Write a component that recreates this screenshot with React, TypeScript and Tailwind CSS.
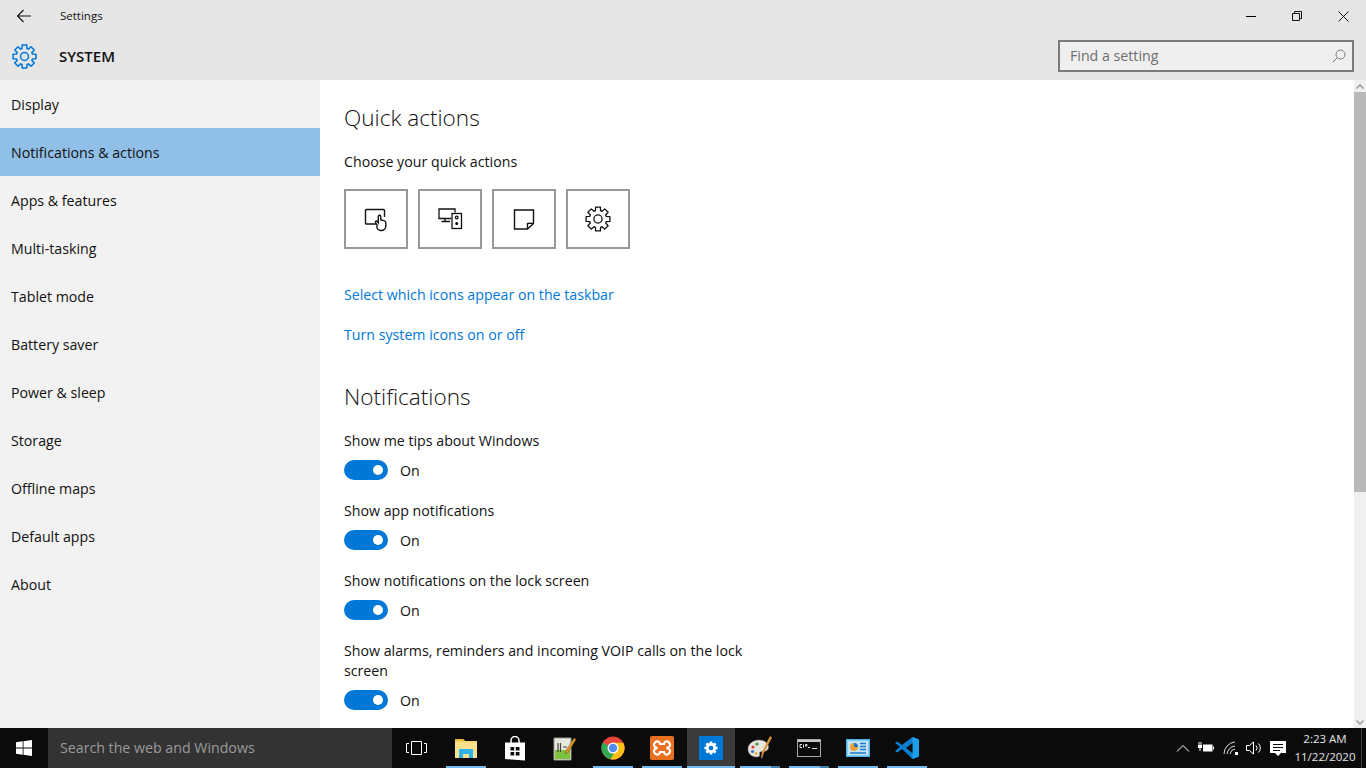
const menu = [
  "Display",
  "Notifications & actions",
  "Apps & features",
  "Multi-tasking",
  "Tablet mode",
  "Battery saver",
  "Power & sleep",
  "Storage",
  "Offline maps",
  "Default apps",
  "About",
];

// outline of a cog with 8 teeth, shared by every settings icon
const gearPath = (c: number, outer: number, inner: number) => {
  const pts: string[] = [];
  for (let i = 0; i < 8; i++) {
    const a = (i * Math.PI) / 4;
    const at = (r: number, d: number) =>
      `${(c + r * Math.cos(a + d)).toFixed(2)} ${(c + r * Math.sin(a + d)).toFixed(2)}`;
    pts.push(at(inner, -0.3), at(outer, -0.2), at(outer, 0.2), at(inner, 0.3));
  }
  return `M${pts.join("L")}Z`;
};

const Gear = ({ color, size, width = 1 }: { color: string; size: number; width?: number }) => (
  <svg width={size} height={size} viewBox="0 0 24 24" fill="none" stroke={color} strokeWidth={width} strokeLinejoin="round">
    <path d={gearPath(12, 11.2, 8)} />
    <circle cx="12" cy="12" r="3.8" />
  </svg>
);

const TouchIcon = () => (
  <svg width="26" height="26" viewBox="0 0 26 26" fill="none" stroke="#111" strokeWidth="1.4">
    <path d="M13 18H3.5a1 1 0 0 1-1-1V4.500a1 1 0 0 1 1-1h17a1 1 0 0 1 1 1V11" />
    <path d="M14 22v-3l-1.500-2.500c-.6-1.200 1-2 1.800-1l1 1.200V10.500c0-1.600 2.500-1.600 2.500 0V14l3 .6c1.200.3 2 1 2 2.400v3a4.500 4.500 0 0 1-4.500 4.500h-1A4.500 4.500 0 0 1 14 22z" fill="#fff" />
  </svg>
);

const ConnectIcon = () => (
  <svg width="26" height="26" viewBox="0 0 26 26" fill="none" stroke="#111" strokeWidth="1.3">
    <path d="M14 12.500H2V3h16v3.500" />
    <path d="M8 12.500V15.500M4.500 15.500H13" />
    <rect x="15" y="7.500" width="9.500" height="15" />
    <circle cx="19.750" cy="11.500" r="1.300" />
    <circle cx="19.750" cy="17.500" r="0.900" fill="#111" />
  </svg>
);

const NoteIcon = () => (
  <svg width="24" height="24" viewBox="0 0 24 24" fill="none" stroke="#111" strokeWidth="1.400">
    <path d="M2.500 3h19v13.500l-6 5.500H2.500z" />
    <path d="M21.500 16.500c-2 0-5.500-.5-6 0v5.500" />
  </svg>
);

const Toggle = ({ label }: { label: string }) => (
  <div className="mt-[21px] w-[420px] first:mt-[18px]">
    <p className="leading-5">{label}</p>
    <div className="mt-[9px] flex h-5 items-center gap-3">
      <div className="flex h-5 w-11 items-center justify-end rounded-full bg-[#0078d7] pr-[5px]">
        <div className="h-[10px] w-[10px] rounded-full bg-white" />
      </div>
      <span className="pt-[2px]">On</span>
    </div>
  </div>
);

const Explorer = () => (
  <svg width="24" height="22" viewBox="0 0 24 22">
    <path d="M1 2h8l2 2h12v17H1z" fill="#f5d67b" />
    <path d="M1 2h8l2 2H1z" fill="#e8b93f" />
    <path d="M1 6h22v15H1z" fill="#fbe08d" />
    <path d="M5 21v-9h14v9h-4v-4H9v4z" fill="#2fb4ea" />
  </svg>
);

const Store = () => (
  <svg width="22" height="25" viewBox="0 0 22 25" fill="#fff">
    <path d="M7 7V4.500a4 4 0 0 1 8 0V7" fill="none" stroke="#fff" strokeWidth="1.500" />
    <path d="M1 6.500h20v18L1 23zM6.500 11v3.500h3.700V11zm5.300 0v3.500h3.700V11zm-5.300 5v3.500h3.700V16zm5.300 0v3.500h3.700V16z" fillRule="evenodd" />
  </svg>
);

const NotepadPlus = () => (
  <svg width="24" height="25" viewBox="0 0 24 25">
    <path d="M2 2h17v22H2z" fill="#e8e8dc" stroke="#9a9a8c" />
    <path d="M3 14h15v9H3z" fill="#7cc23f" />
    <path d="M6 7v9M8.500 7v9M11 11h4" stroke="#444" strokeWidth="1.200" />
    <path d="M22 2l2 1.500-8 13-2.500 1.500.3-3z" fill="#d99a2b" stroke="#7a4f10" strokeWidth="0.500" />
  </svg>
);

const Chrome = () => (
  <svg width="24" height="24" viewBox="0 0 24 24">
    <circle cx="12" cy="12" r="11.500" fill="#e8453c" />
    <path d="M12 12 L1.700 6.500 A11.500 11.500 0 0 0 9.500 23.200 L15 14z" fill="#34a853" />
    <path d="M12 6.800h10.300A11.500 11.500 0 0 1 9.500 23.200L15 14z" fill="#fbc116" />
    <circle cx="12" cy="12" r="5.500" fill="#fff" />
    <circle cx="12" cy="12" r="4.200" fill="#4d8cf5" />
  </svg>
);

const Xampp = () => (
  <svg width="24" height="24" viewBox="0 0 24 24">
    <rect width="24" height="24" rx="2" fill="#e8701f" />
    <path d="M5 6.500c2-2 5-1 5 1.500h4c0-2.500 3-3.500 5-1.500s1 5-1.500 5v1c2.500 0 3.500 3 1.500 5s-5 1-5-1.500h-4c0 2.500-3 3.500-5 1.500s-1-5 1.500-5v-1C4 11.500 3 8.500 5 6.500z" fill="none" stroke="#fff" strokeWidth="2.200" />
  </svg>
);

const Palette = () => (
  <svg width="26" height="26" viewBox="0 0 26 26">
    <path d="M12 5C6 5 1 9 1 14s4 8 9 8c2.500 0 3-1.500 2.500-3-.5-1.800 1-2.500 3-2.500 3.500 0 6-1.500 6-4.500C21.500 8 17 5 12 5z" fill="#e6e4dc" stroke="#8a8a8a" strokeWidth="0.500" />
    <circle cx="6" cy="12" r="1.600" fill="#d9433a" />
    <circle cx="10" cy="9" r="1.600" fill="#3f9a4a" />
    <circle cx="5.500" cy="16.500" r="1.600" fill="#3c78c8" />
    <circle cx="9" cy="18.500" r="1.400" fill="#e8b93f" />
    <path d="M23 1l2 1.500-8 15-2 6-1-.5 1-6z" fill="#d8923a" />
  </svg>
);

const Cmd = () => (
  <svg width="24" height="18" viewBox="0 0 24 18">
    <rect x="0.500" y="0.500" width="23" height="17" fill="#0a0a0a" stroke="#a8a8a8" />
    <rect x="1" y="1" width="22" height="2" fill="#c8c8c8" />
    <path d="M3 5.500H5M3 8.500H5M3 5.500v3M6.500 5.500v3M8.500 5.500H10v1.500H8.500zM11 8.500h2M15 9.500h5" stroke="#e0e0e0" strokeWidth="1" fill="none" />
  </svg>
);

const Panel = () => (
  <svg width="24" height="18" viewBox="0 0 24 18">
    <rect width="24" height="18" fill="#4fb3ec" />
    <rect x="1.500" y="1.500" width="21" height="15" fill="#bfe4f8" />
    <circle cx="8" cy="8" r="4" fill="#f0a030" />
    <path d="M8 8V4a4 4 0 0 1 4 4z" fill="#1f78c8" />
    <path d="M14 4.500h6M14 7.500h6M14 10.500h6M4 14h16" stroke="#1f78c8" strokeWidth="1.300" />
  </svg>
);

const VsCode = () => (
  <svg width="24" height="24" viewBox="0 0 24 24">
    <path d="M17.500 1L24 3.500v17L17.500 23 7 13l-4.500 3.500L0 15l5-4-5-4 2.500-1.500L7 9z" fill="#0a7fd0" />
    <path d="M17.500 1L24 3.500v17L17.500 23z" fill="#1e9de8" />
    <path d="M17.500 7v10L11 12z" fill="#0b0b0b" />
  </svg>
);

const apps = [
  { key: "explorer", icon: <Explorer />, line: true },
  { key: "store", icon: <Store /> },
  { key: "notepad", icon: <NotepadPlus /> },
  { key: "chrome", icon: <Chrome />, line: true },
  { key: "xampp", icon: <Xampp />, line: true },
  {
    key: "settings",
    active: true,
    line: true,
    icon: (
      <div className="flex h-6 w-6 items-center justify-center bg-[#0078d7]">
        <svg width="14" height="14" viewBox="0 0 24 24">
          <path d={gearPath(12, 11.5, 8)} fill="#fff" />
          <circle cx="12" cy="12" r="8.500" fill="#fff" />
          <circle cx="12" cy="12" r="4" fill="#0078d7" />
        </svg>
      </div>
    ),
  },
  { key: "paint", icon: <Palette />, line: true, stacked: true },
  { key: "cmd", icon: <Cmd />, line: true, stacked: true },
  { key: "panel", icon: <Panel />, line: true },
  { key: "vscode", icon: <VsCode />, line: true },
];

const App = () => {
  return (
    <div className="flex h-screen w-full flex-col overflow-hidden bg-white font-['Open_Sans','Noto_Sans',sans-serif] text-[14.2px] text-[#111]">
      <header className="h-20 shrink-0 bg-[#e6e6e6]">
        <div className="flex h-8 items-center">
          <div className="flex w-[59px] justify-center pr-[11px]">
            <svg width="16" height="14" viewBox="0 0 16 14" fill="none" stroke="#111" strokeWidth="1.100">
              <path d="M15 7H1.500M7.500 1L1.500 7l6 6" />
            </svg>
          </div>
          <span className="pl-px text-[11.5px]">Settings</span>
          <div className="ml-auto flex">
            <div className="flex h-8 w-[46px] items-center justify-center">
              <div className="h-px w-[10px] bg-black" />
            </div>
            <div className="flex h-8 w-[46px] items-center justify-center">
              <svg width="10" height="10" viewBox="0 0 10 10" fill="none" stroke="#111">
                <path d="M.5 2.500h7v7h-7zM2.500 2.500v-2h7v7h-2" />
              </svg>
            </div>
            <div className="flex h-8 w-[46px] items-center justify-center">
              <svg width="11" height="11" viewBox="0 0 11 11" fill="none" stroke="#111">
                <path d="M.5.500l10 10M10.500.500l-10 10" />
              </svg>
            </div>
          </div>
        </div>
        <div className="flex h-12 items-center pr-3">
          <div className="flex w-[59px] justify-center pr-[11px]">
            <Gear color="#0078d7" size={25} width={1.5} />
          </div>
          <span className="text-[15px] font-semibold">SYSTEM</span>
          <div className="ml-auto flex h-8 w-[296px] items-center justify-between border-2 border-[#7a7a7a] bg-[#efefef] pl-[10px] pr-[6px]">
            <span className="text-[#6e6e6e]">Find a setting</span>
            <svg width="14" height="14" viewBox="0 0 14 14" fill="none" stroke="#777">
              <circle cx="8.500" cy="5.500" r="4.500" />
              <path d="M5.200 8.800L.8 13.200" />
            </svg>
          </div>
        </div>
      </header>

      <div className="flex min-h-0 flex-1">
        <nav className="w-80 shrink-0 bg-[#f2f2f2]">
          {menu.map((item) => (
            <div
              key={item}
              className={`flex h-12 items-center pl-[11px] pt-[2px] ${item === "Notifications & actions" ? "bg-[#90c0e8]" : ""}`}
            >
              {item}
            </div>
          ))}
        </nav>

        <main className="min-w-0 flex-1 overflow-hidden pl-6 pt-[22px]">
          <h2 className="text-[22.6px] font-light leading-8">Quick actions</h2>
          <p className="mt-[18px] leading-5">Choose your quick actions</p>
          <div className="mt-[17px] flex gap-[10px]">
            {[<TouchIcon />, <ConnectIcon />, <NoteIcon />, <Gear color="#111" size={26} width={1.2} />].map((icon, i) => (
              <div key={i} className="flex h-[60px] w-16 items-center justify-center border-2 border-[#999]">
                {icon}
              </div>
            ))}
          </div>
          <p className="mt-9 leading-5 text-[#0078d7]">Select which icons appear on the taskbar</p>
          <p className="mt-5 leading-5 text-[#0078d7]">Turn system icons on or off</p>
          <h2 className="mt-9 text-[22.6px] font-light leading-8">Notifications</h2>
          <div>
            <Toggle label="Show me tips about Windows" />
            <Toggle label="Show app notifications" />
            <Toggle label="Show notifications on the lock screen" />
            <Toggle label="Show alarms, reminders and incoming VOIP calls on the lock screen" />
          </div>
        </main>

        <div className="flex w-3 shrink-0 flex-col bg-[#f0f0f0]">
          <div className="flex h-3 items-center justify-center">
            <svg width="8" height="5" viewBox="0 0 8 5" fill="none" stroke="#9a9a9a" strokeWidth="1.500">
              <path d="M.5 4.500L4 1l3.500 3.500" />
            </svg>
          </div>
          <div className="h-[400px] bg-[#b9b9b9]" />
          <div className="flex-1" />
          <div className="flex h-3 items-center justify-center">
            <svg width="8" height="5" viewBox="0 0 8 5" fill="none" stroke="#9a9a9a" strokeWidth="1.500">
              <path d="M.5.500L4 4l3.500-3.500" />
            </svg>
          </div>
        </div>
      </div>

      <footer className="flex h-10 shrink-0 items-stretch bg-[#0b0b0b] text-white">
        <div className="flex w-12 items-center justify-center">
          <svg width="16" height="16" viewBox="0 0 16 16" fill="#fff">
            <path d="M0 2.300l6.700-1v6.300H0zM7.500 1.200L16 0v7.600H7.500zM0 8.400h6.700v6.300l-6.700-1zM7.500 8.400H16V16l-8.500-1.200z" />
          </svg>
        </div>
        <div className="flex w-[344px] items-center bg-[#333333] pl-3 text-[#9a9a9a]">
          Search the web and Windows
        </div>
        <div className="mr-[2px] flex w-12 items-center justify-center">
          <svg width="21" height="14" viewBox="0 0 21 14" fill="none" stroke="#fff">
            <path d="M5.500.5h10v13h-10zM3 2.500H.5v9H3M18 2.500h2.500v9H18" />
          </svg>
        </div>
        {apps.map((app) => (
          <div
            key={app.key}
            className={`relative mr-px flex w-12 items-center justify-center ${app.active ? "bg-[#3a3a3a]" : ""}`}
          >
            {app.icon}
            {app.line && (
              <div
                className={`absolute bottom-0 h-[2px] bg-[#76b9ed] ${app.active ? "inset-x-0" : "inset-x-1"}`}
              />
            )}
            {app.stacked && <div className="absolute bottom-0 right-1 h-[2px] w-[9px] bg-[#4a80a8]" />}
          </div>
        ))}
        <div className="ml-auto flex items-center">
          <svg width="14" height="8" viewBox="0 0 14 8" fill="none" stroke="#fff" className="mr-2">
            <path d="M1 7.500l6-6 6 6" />
          </svg>
          <svg width="16" height="12" viewBox="0 0 16 12" className="mr-[9px]" fill="#fff">
            <path d="M.5 0h1v3h-1zM2.500 0h1v3h-1zM0 3h4v3H0zM1.500 6h1v3h-1z" />
            <path d="M5 2.500h9.500v7H5z" />
            <path d="M15 4.500h1v3h-1z" />
          </svg>
          <svg width="16" height="14" viewBox="0 0 16 14" fill="none" stroke="#ddd" className="mr-[7px]">
            <path d="M1 13a12 12 0 0 1 11-12M4 13a9 9 0 0 1 8-8M7 13a6 6 0 0 1 5-5" />
            <rect x="12" y="11" width="3" height="3" fill="#fff" stroke="none" />
          </svg>
          <svg width="16" height="14" viewBox="0 0 16 14" fill="none" stroke="#fff" className="mr-2">
            <path d="M.5 4.500h3l4-3.500v12l-4-3.500h-3zM10 4.500a3.500 3.500 0 0 1 0 5M12.500 2.500a6.500 6.500 0 0 1 0 9" />
          </svg>
          <svg width="16" height="15" viewBox="0 0 16 15" fill="#fff" className="mr-2">
            <path d="M0 0h16v12h-5l-3 3-3-3H0zM3 3v1h10V3zm0 3v1h10V6zm0 3v1h7V9z" fillRule="evenodd" />
          </svg>
          <div className="flex w-[62px] flex-col items-center text-[11.5px] leading-[18px] text-[#e6e6e6]">
            <span>2:23 AM</span>
            <span>11/22/2020</span>
          </div>
          <div className="ml-[5px] h-full w-[5px] border-l border-[#444]" />
        </div>
      </footer>
    </div>
  );
};

export default App;
